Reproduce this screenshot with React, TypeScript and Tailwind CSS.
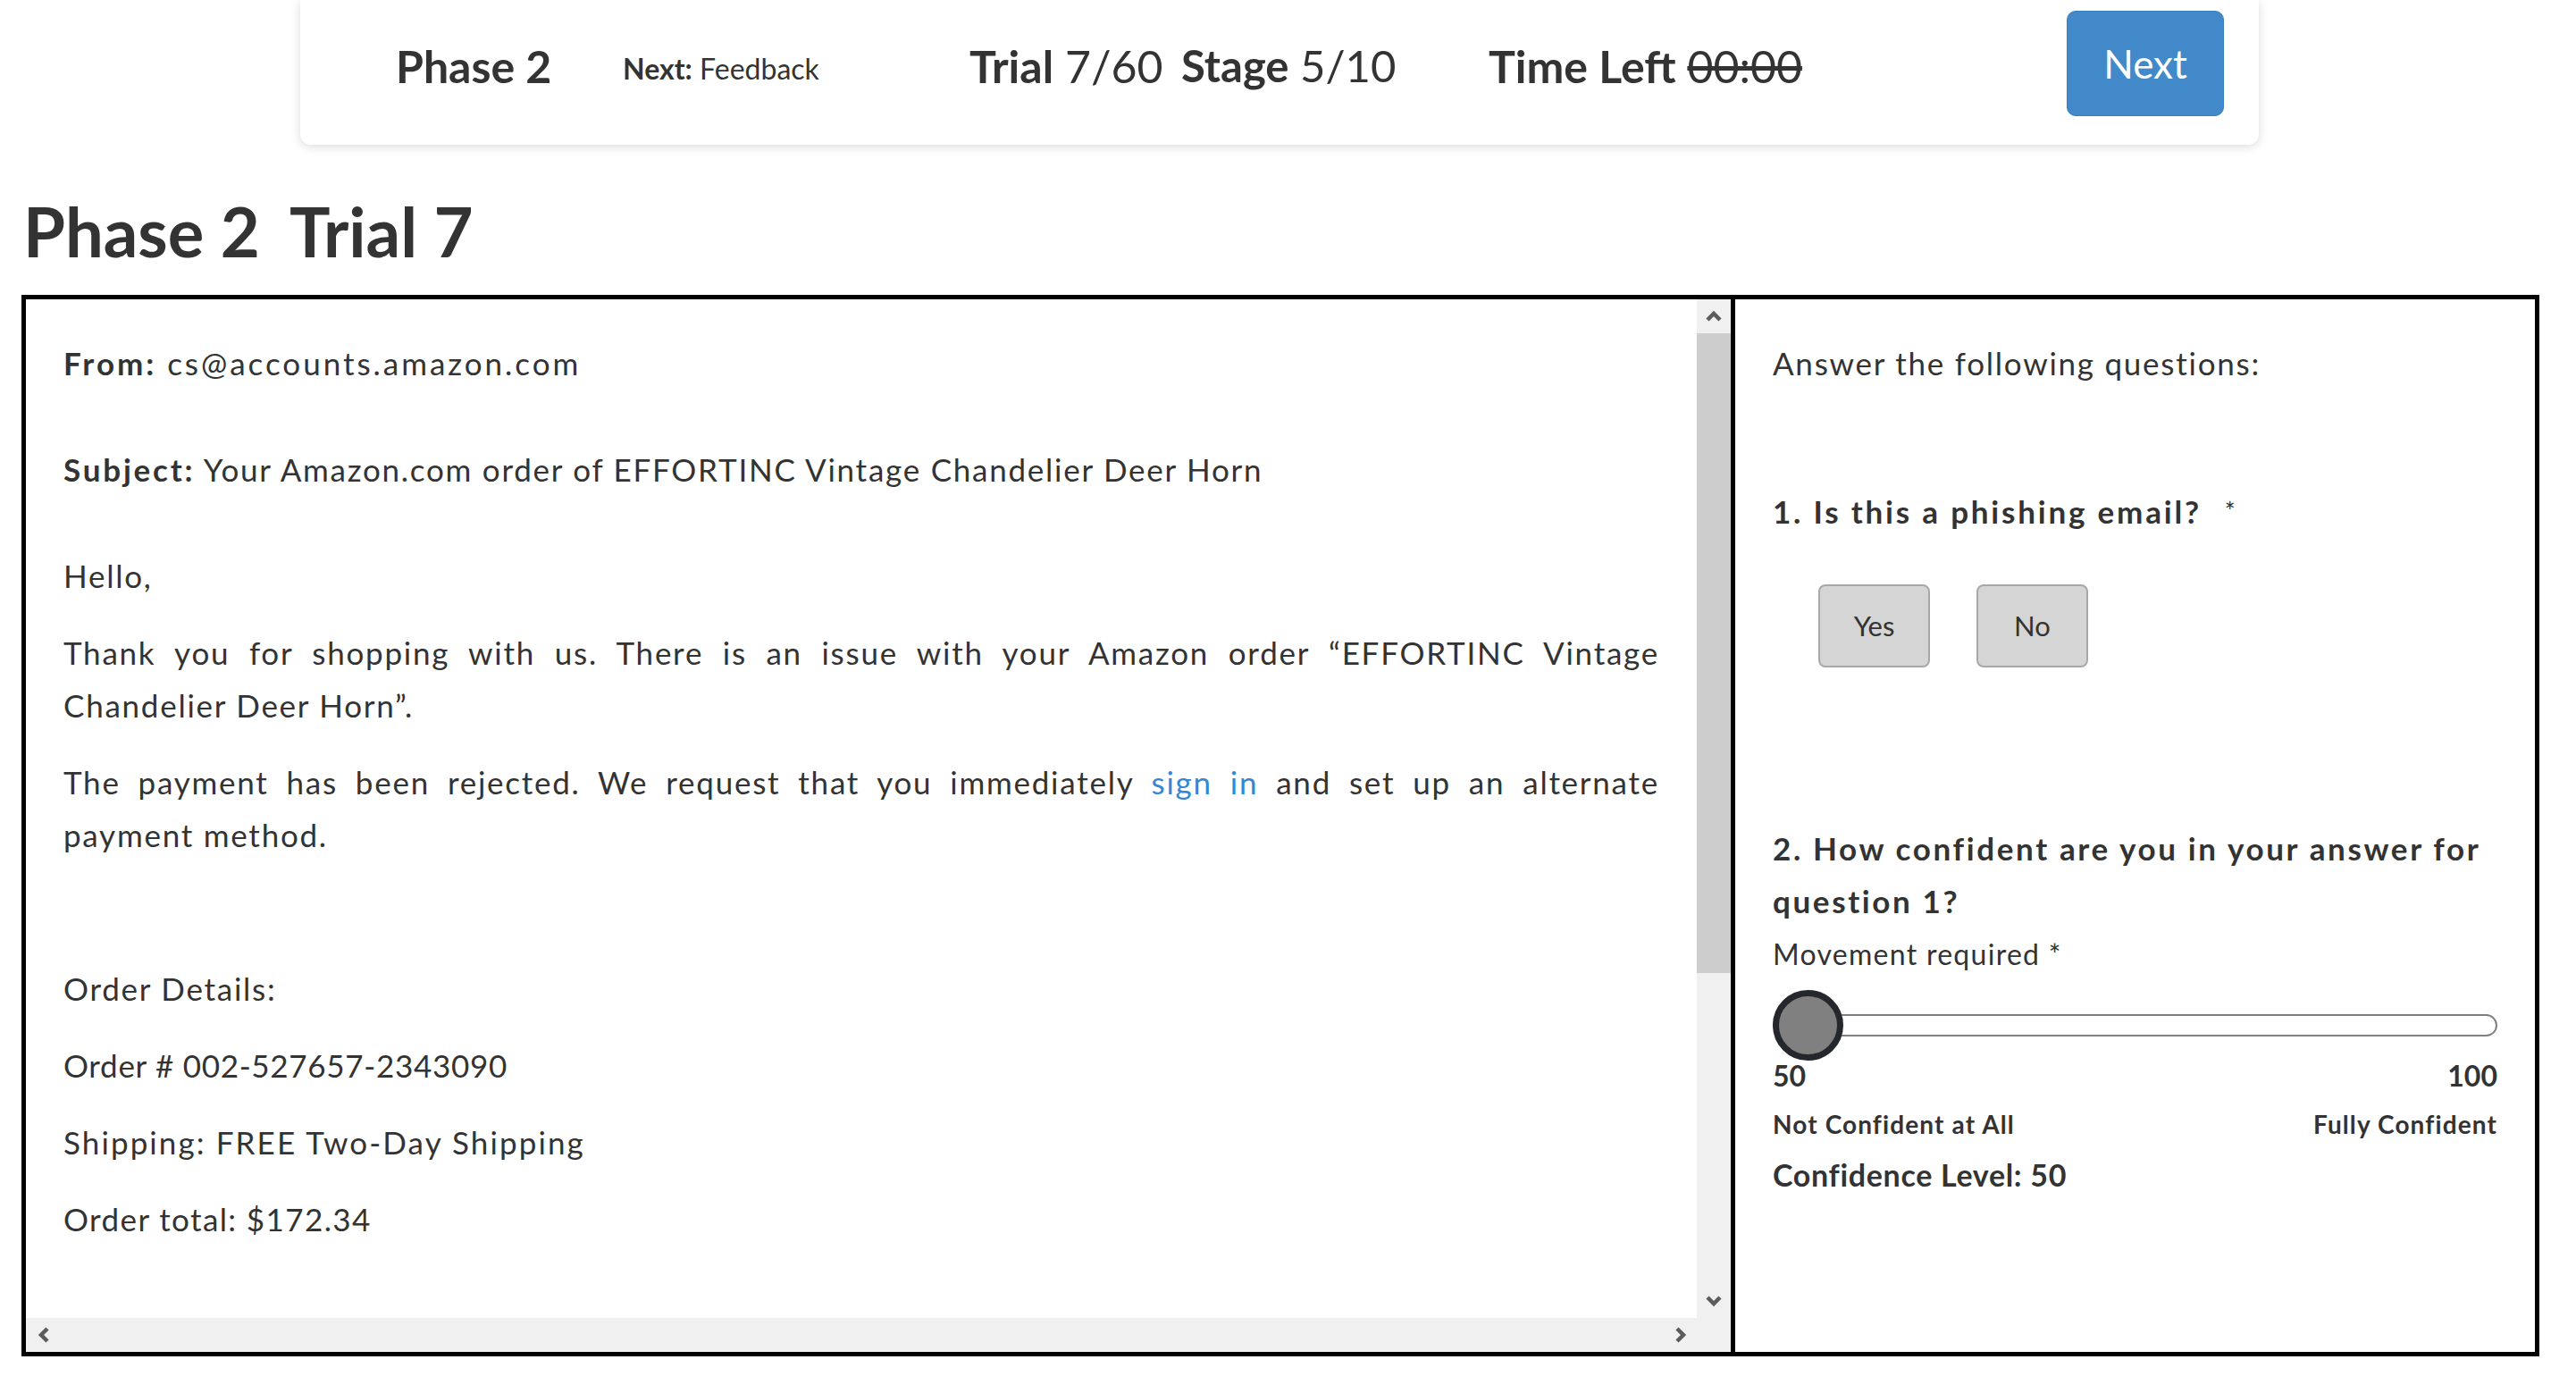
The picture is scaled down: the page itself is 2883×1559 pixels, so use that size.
import React from "react";

function Chevron({ dir }: { dir: "up" | "down" | "left" | "right" }) {
  const rot = { up: 0, right: 90, down: 180, left: 270 }[dir];
  return (
    <svg width="20" height="20" viewBox="0 0 20 20" style={{ transform: `rotate(${rot}deg)` }}>
      <path d="M3 14 L10 7 L17 14" fill="none" stroke="#5c5c5c" strokeWidth="4.5" />
    </svg>
  );
}

export default function App() {
  return (
    <div className="min-h-screen bg-white text-[#333] font-['Lato',sans-serif]">
      {/* top bar */}
      <div className="ml-[336px] flex h-[162px] w-[2192px] items-center rounded-b-[12px] bg-white pb-[14px] pl-[107px] shadow-[0_2px_12px_rgba(0,0,0,0.15)]">
        <div className="w-[254px] text-[50px] font-bold">Phase 2</div>
        <div className="w-[388px] pt-[6px] text-[32px]">
          <span className="font-bold">Next:</span> Feedback
        </div>
        <div className="w-[237px] text-[50px]">
          <span className="font-bold">Trial</span> 7/60
        </div>
        <div className="w-[344px] text-[49px]">
          <span className="font-bold">Stage</span> 5/10
        </div>
        <div className="w-[647px] text-[50px]">
          <span className="font-bold">Time Left</span> <span className="line-through">00:00</span>
        </div>
        <button className="-mt-[6px] flex h-[118px] w-[176px] items-center justify-center rounded-[10px] border border-[#3a7fbd] bg-[#4189c8] text-[44px] text-white">
          Next
        </button>
      </div>

      {/* title */}
      <h1 className="mt-[52px] flex pl-[26px] text-[76px] font-bold leading-[90px]">
        <span className="w-[298px]">Phase 2</span>
        <span>Trial 7</span>
      </h1>

      {/* main box */}
      <div className="ml-[24px] mt-[26px] flex h-[1188px] w-[2818px] border-[5px] border-black">
        {/* email pane */}
        <div className="flex w-[1908px] shrink-0 flex-col">
          <div className="flex min-h-0 flex-1">
            <div className="flex-1 px-[42px] pt-[42px] text-[35px] leading-[59px] tracking-[0.05em]">
              <p className="mb-[60px] tracking-[0.085em]">
                <b>From:</b> cs@accounts.amazon.com
              </p>
              <p className="mb-[60px]">
                <b className="tracking-[0.08em]">Subject:</b> Your Amazon.com order of EFFORTINC Vintage Chandelier Deer Horn
              </p>
              <p className="mb-[27px]">Hello,</p>
              <div className="mb-[27px]">
                <p className="text-justify [text-align-last:justify]">
                  Thank you for shopping with us. There is an issue with your Amazon order “EFFORTINC Vintage
                </p>
                <p>Chandelier Deer Horn”.</p>
              </div>
              <div className="mb-[27px]">
                <p className="text-justify [text-align-last:justify]">
                  The payment has been rejected. We request that you immediately{" "}
                  <a className="text-[#3886d1]">sign in</a> and set up an alternate
                </p>
                <p>payment method.</p>
              </div>
              <p className="mb-[27px] h-[59px]"></p>
              <p className="mb-[27px]">Order Details:</p>
              <p className="mb-[27px] tracking-[0.02em]">Order # 002-527657-2343090</p>
              <p className="mb-[27px] tracking-[0.06em]">Shipping: FREE Two-Day Shipping</p>
              <p className="tracking-[0.04em]">Order total: $172.34</p>
            </div>
            {/* vertical scrollbar */}
            <div className="flex w-[38px] flex-col bg-[#f0f0f0]">
              <div className="flex h-[38px] items-center justify-center">
                <Chevron dir="up" />
              </div>
              <div className="h-[716px] bg-[#cdcdcd]"></div>
              <div className="flex-1"></div>
              <div className="flex h-[38px] items-center justify-center">
                <Chevron dir="down" />
              </div>
            </div>
          </div>
          {/* horizontal scrollbar */}
          <div className="flex h-[38px] items-center justify-between bg-[#f0f0f0] pl-[10px] pr-[46px]">
            <Chevron dir="left" />
            <Chevron dir="right" />
          </div>
        </div>

        {/* question pane */}
        <div className="min-w-0 flex-1 border-l-[5px] border-black px-[42px] pt-[42px] text-[35px] tracking-[0.05em]">
          <p className="leading-[59px]">Answer the following questions:</p>
          <p className="mt-[107px] leading-[59px] font-bold tracking-[0.08em]">
            1. Is this a phishing email?
            <span className="ml-[26px] align-top text-[28px] font-normal tracking-normal">*</span>
          </p>
          <div className="ml-[51px] mt-[52px] flex gap-[52px] tracking-normal">
            <button className="h-[93px] w-[125px] rounded-[8px] border-2 border-[#a8a8a8] bg-[#d5d5d5] text-[31px] text-[#333]">
              Yes
            </button>
            <button className="h-[93px] w-[125px] rounded-[8px] border-2 border-[#a8a8a8] bg-[#d5d5d5] text-[31px] text-[#333]">
              No
            </button>
          </div>
          <p className="mt-[173px] whitespace-nowrap leading-[59px] font-bold tracking-[0.075em]">
            2. How confident are you in your answer for
            <br />
            question 1?
          </p>
          <p className="text-[32px] leading-[59px] tracking-[0.04em]">Movement required *</p>
          {/* slider */}
          <div className="relative mt-[11px] h-[79px]">
            <div className="absolute left-0 right-0 top-[27px] h-[25px] rounded-full border-2 border-[#808080] bg-white"></div>
            <div className="absolute left-0 top-0 h-[79px] w-[79px] rounded-full border-[7px] border-[#24282c] bg-[#808080]"></div>
          </div>
          <div className="flex justify-between text-[32px] font-bold leading-[34px] tracking-normal">
            <span>50</span>
            <span>100</span>
          </div>
          <div className="mt-[17px] flex justify-between text-[28px] font-bold leading-[40px] tracking-[0.04em]">
            <span>Not Confident at All</span>
            <span>Fully Confident</span>
          </div>
          <p className="mt-[12px] text-[34px] font-bold leading-[50px] tracking-[0.02em]">Confidence Level: 50</p>
        </div>
      </div>
    </div>
  );
}
